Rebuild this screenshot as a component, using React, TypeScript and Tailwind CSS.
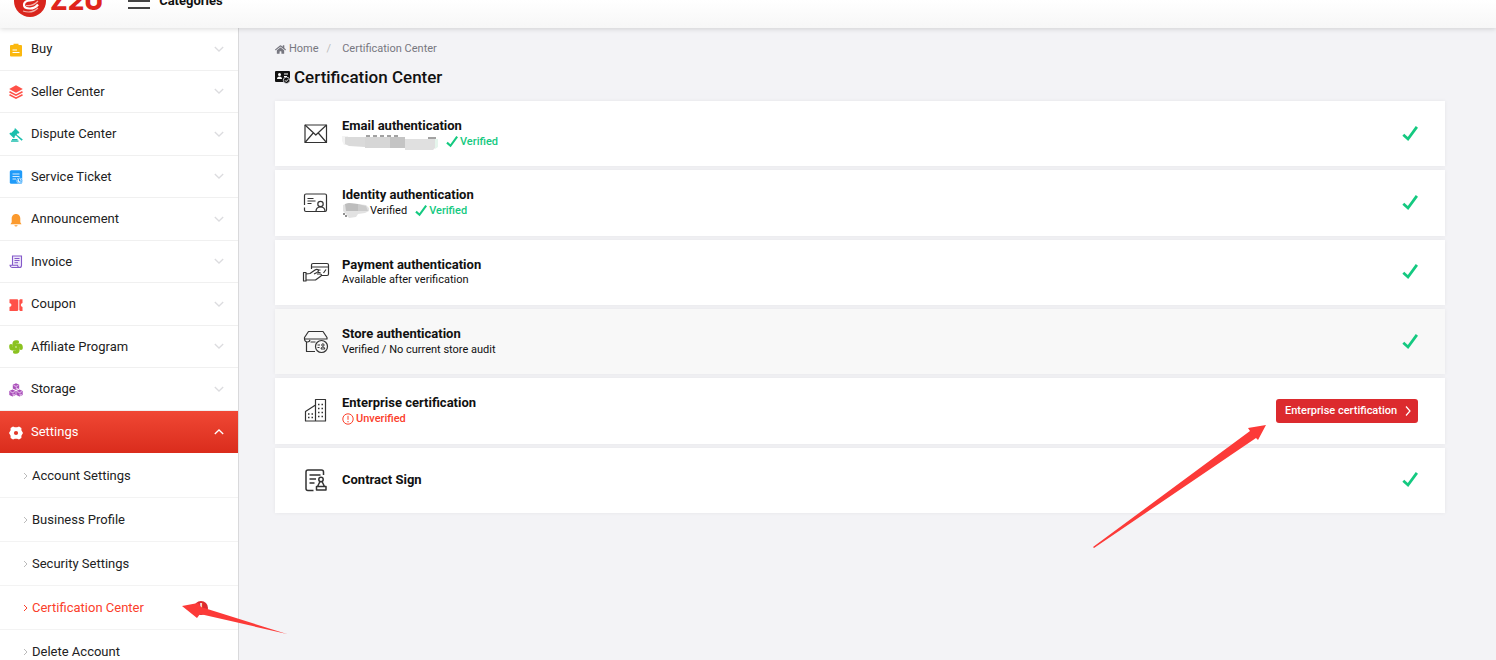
import React from 'react';
import { FaHome } from 'react-icons/fa';

interface MenuItem {
  label: string;
  icon: React.ReactNode;
}

interface Certification {
  title: string;
  icon: React.ReactNode;
  detail?: React.ReactNode;
  muted?: boolean;
  action?: string;
}

const MENU: MenuItem[] = [
  {
    label: 'Buy',
    icon: (
      <>
        <path d="M2 2h2.500V.8h5V2H12q1 0 1 1v9.500q0 1-1 1H2q-1 0-1-1V3q0-1 1-1Z" fill="#fbb80f" />
        <path d="M3.500 7h4.500M3.500 9.500h7" stroke="#fff" strokeWidth="1.100" />
      </>
    ),
  },
  {
    label: 'Seller Center',
    icon: (
      <>
        <path d="M7 .3 13.800 4 7 7.700.2 4Z" fill="#ff5148" />
        <path d="m.5 6.800 6.500 3.400 6.500-3.400M.5 9.700 7 13.100l6.500-3.400" stroke="#ff5148" strokeWidth="1.600" fill="none" />
      </>
    ),
  },
  {
    label: 'Dispute Center',
    icon: (
      <>
        <path d="m6.300.3 4.200 4.200-1.200 1.200-.5-.4-1.200 1.200 6.200 5-1.200 1.300-5.800-5.600-1.300 1.300.5.500-1.200 1.200L.3 5.700l1.200-1.200.6.500L5.800 1.600l-.6-.5Z" fill="#1cbfae" />
        <path d="M2 13.200h7.500M3 11.600h5.500" stroke="#1cbfae" strokeWidth="1.200" />
      </>
    ),
  },
  {
    label: 'Service Ticket',
    icon: (
      <>
        <rect x=".8" y=".3" width="12.400" height="13.400" rx="1.500" fill="#1f9bf9" />
        <path d="M3.500 4h7M3.500 6.500h7M3.500 9h3.500" stroke="#d3ebff" />
        <circle cx="10.500" cy="10.800" r="3" fill="#e6f4ff" />
        <path d="M10.500 9v2h1.800" stroke="#1f9bf9" fill="none" />
        <circle cx="10.500" cy="10.800" r="2.400" stroke="#1f9bf9" fill="none" strokeWidth=".7" />
      </>
    ),
  },
  {
    label: 'Announcement',
    icon: (
      <>
        <path d="M7 1c3 0 4.300 2.300 4.300 4.600v3.600l1.200 2H1.500l1.200-2V5.600C2.700 3.300 4 1 7 1Z" fill="#fb9a2e" />
        <path d="M5.300 12.300h3.400q-.4 1.200-1.700 1.200t-1.700-1.200Z" fill="#fb9a2e" />
      </>
    ),
  },
  {
    label: 'Invoice',
    icon: (
      <>
        <path d="M3.500 10V1h9v9.500q0 2-2 2H3q-1.800 0-2-2.200h7.500q.2 2.200 2 2.200" fill="#efe8fa" stroke="#8459c9" strokeWidth="1.100" />
        <path d="M5.500 3.500h5M5.500 5.500h5M5.500 7.700h3.500" stroke="#8459c9" />
      </>
    ),
  },
  {
    label: 'Coupon',
    icon: (
      <>
        <path d="M.5 1.300h8l.8 1v9.800l-.8 1h-8V9q2-.3 2-2t-2-2Z" fill="#ff5148" />
        <path d="M13.500 1.300H11l-.7 1v9.800l.7 1h2.500V9q-1.700-.5-1.700-2t1.700-2Z" fill="#ff5148" />
      </>
    ),
  },
  {
    label: 'Affiliate Program',
    icon: (
      <>
        <g stroke="#8bc220" strokeWidth="3.600" strokeLinecap="round">
          <path d="M8.300 2H7q-1.800 0-1.800 2v2" />
          <path d="M12 8.300V7q0-1.800-2-1.800H8" />
          <path d="M5.700 12H7q1.800 0 1.800-2V8" />
          <path d="M2 5.700V7q0 1.800 2 1.800h2" />
        </g>
        <circle cx="7" cy="7" r=".7" fill="#e4f3c5" />
      </>
    ),
  },
  {
    label: 'Storage',
    icon: (
      <>
        <path d="m7 .3 3.200 1.500v3.600L7 7 3.800 5.400V1.800ZM3.500 6.500l3.200 1.500v3.900l-3.200 1.600-3.200-1.600V8ZM10.500 6.500 13.700 8v3.900l-3.200 1.600-3.200-1.600V8Z" fill="#a94fb9" />
        <path d="m4.600 2.400 2.400 1 2.400-1M7.300 4.200v1.900l2-.9M1.100 8.600l2.400 1 2.400-1M4 10.500v1.900l1.900-.9M8.100 8.600l2.400 1 2.400-1M11 10.500v1.900l1.900-.9" stroke="#f7e3fb" strokeWidth=".8" fill="none" />
      </>
    ),
  },
];

const SETTINGS_LINKS = [
  'Account Settings',
  'Business Profile',
  'Security Settings',
  'Certification Center',
  'Delete Account',
];

const MenuIcon: React.FC<{ children: React.ReactNode }> = ({ children }) => (
  <svg className="w-3.5 h-3.5 mt-0.5 flex-shrink-0" viewBox="0 0 14 14" fill="none">
    {children}
  </svg>
);

const Tick: React.FC<{ className: string }> = ({ className }) => (
  <svg className={className} viewBox="0 0 16 16" fill="none" stroke="#14c980" strokeWidth="2.800">
    <path d="M1.300 8.800 6 13 14.900.9" />
  </svg>
);

const LineIcon: React.FC<{ children: React.ReactNode }> = ({ children }) => (
  <svg className="w-7 h-7" viewBox="0 0 28 28" fill="none" stroke="#333" strokeWidth="1.200" strokeLinejoin="round">
    {children}
  </svg>
);

const Verified = () => (
  <span className="flex items-center gap-0.5 font-medium text-[#14c980]">
    <Tick className="w-3 h-3" />
    Verified
  </span>
);

const CERTIFICATIONS: Certification[] = [
  {
    title: 'Email authentication',
    icon: (
      <>
        <rect x="3" y="5" width="21.500" height="17.500" />
        <path d="m3 5 10.800 10L24.500 5M3 22.500l8.200-9.500M24.500 22.500 16.300 13" />
      </>
    ),
    detail: (
      <>
        {/* masked address */}
        <svg className="w-24 h-4" viewBox="0 0 96 16">
          <path d="M24 2h4M31 2h4M38 2h4M45 2h4M52 2h4M86 4h8" stroke="#444" strokeWidth="1" />
          <path d="M0 2h6v9H2L0 7Z" fill="#f3f3f3" />
          <path d="M3 3h20v10l-16-1-4-2Z" fill="#dadada" />
          <path d="M23 3h25v11H23Z" fill="#d6d6d6" />
          <path d="M48 3h15v11H48Z" fill="#c4c4c4" />
          <path d="M63 5h30v9l-2 2H63Z" fill="#e0e0e0" />
          <path d="M93 5h3v8l-3 2Z" fill="#e5f5ec" />
        </svg>
        <Verified />
      </>
    ),
  },
  {
    title: 'Identity authentication',
    icon: (
      <>
        <path d="M2.500 16V6.500Q2.500 5 4 5h19q1.500 0 1.500 1.500V21q0 1.500-1.500 1.500H4q-1.500 0-1.500-1.500v-2.500" />
        <path d="M5.500 9.500h6M5.500 12h8M5.500 14.500h4" />
        <circle cx="18.500" cy="15" r="2.700" />
        <path d="M14 22.500q0-4.500 4.500-4.500t4.500 4.500" />
      </>
    ),
    detail: (
      <>
        <span className="flex items-center">
          <svg className="w-7 h-4" viewBox="0 0 28 16">
            <path d="M1 11h2M3 13h2" stroke="#222" />
            <path d="M1 2 6 0l18 2 3 3v3l-4 2-7 1-2 3-7 1-3-4-3-3Z" fill="#e2e2e2" />
            <path d="M3 1 7 0l9 1v7H4Z" fill="#bdbdbd" />
            <path d="M16 1l8 2 2 5H16Z" fill="#cbcbcb" />
          </svg>
          Verified
        </span>
        <Verified />
      </>
    ),
  },
  {
    title: 'Payment authentication',
    icon: (
      <>
        <path d="M9.500 11V7q0-1.500 1.500-1.500h14q1.500 0 1.500 1.500v9q0 1.500-1.500 1.500h-6M9.500 9h17M21.500 15l2.500-3.500M16 12h2.500M16 14.500h2.500" />
        <path d="M1.500 14.500h2.500v8.500H1.500ZM4 16l4-.5 5-3.500q2-1.200 3.500.2.200 1.500-1.500 2.300l-3 1.500M4 22h9.500l5.500-4q1-1.500-.5-2h-3.500" />
      </>
    ),
    detail: 'Available after verification',
  },
  {
    title: 'Store authentication',
    icon: (
      <>
        <path d="M6.500 3.500h14.500l4 6v1.500h-22.500V9.500ZM2.500 11.500q.5 2.500 3 2.500 2 0 2.500-2M4.500 14v9.500H13M8.500 14h5" />
        <circle cx="19.500" cy="18.500" r="6" fill="#f8f8f8" />
        <path d="M15.500 17h2.500M15.500 19.500h2M19 21q0-2 1.900-2t1.900 2Z" strokeWidth="1" />
        <circle cx="20.900" cy="17" r="1.200" strokeWidth="1" />
      </>
    ),
    detail: 'Verified / No current store audit',
    muted: true,
  },
  {
    title: 'Enterprise certification',
    icon: (
      <>
        <path d="M13.500 24v-21.500h10V24H3.500V14.500l10-6.500" />
        <path d="M16 7.500h1.500M19.500 7.500H21M16 11.500h1.500M19.500 11.500H21M16 15.500h1.500M19.500 15.500H21M16 19.500h1.500M19.500 19.500H21M6 17h1.500M9.500 17H11M6 20.500h1.500M9.500 20.500H11" strokeWidth="1.400" />
      </>
    ),
    detail: (
      <span className="flex items-center gap-0.5 font-medium text-[#fb402b]">
        <svg className="w-3 h-3" viewBox="0 0 12 12" fill="none" stroke="#fb402b">
          <circle cx="6" cy="6" r="5.200" />
          <path d="M6 2.800v4M6 8v1.300" />
        </svg>
        Unverified
      </span>
    ),
    action: 'Enterprise certification',
  },
  {
    title: 'Contract Sign',
    icon: (
      <>
        <path d="M21.500 9V6q0-2-2-2H6q-2 0-2 2v16.500q0 2 2 2h5.500M7.500 9h11M7.500 13h6.500M7.500 17h5" strokeWidth="1.500" />
        <circle cx="19" cy="13.500" r="2.200" strokeWidth="1.500" />
        <path d="m18 15.500-2.500 5h7l-2.500-5M14.500 20.500h9.500v3.500h-9.500Z" strokeWidth="1.500" />
      </>
    ),
  },
];

const Header = () => (
  <header className="relative z-10 bg-linear-to-b from-white to-[#f7f7f7] shadow-[0_1px_5px_rgba(0,0,0,0.15)]">
    <div className="flex h-7 items-start overflow-hidden pl-3.5">
      <a href="#home" className="flex items-center -mt-[15px] text-[#e0251c]">
        <svg className="w-8 h-8" viewBox="0 0 32 32" fill="none">
          <circle cx="16" cy="16" r="16" fill="#d9251d" />
          <path d="M8 11q3-5 9-4 6 1 5.500 5-.5 3-6.500 3.500-6 .5-6 4.500 0 3.500 6 3.500 5 0 8-4" stroke="#fff" strokeWidth="2.200" />
          <path d="M12 20.500q7 1 12-4.500M9 26q9 3 15-3" stroke="#f3b3ae" strokeWidth="1.200" />
        </svg>
        <span className="ml-1 font-['Inter'] text-[26px] leading-8 font-extrabold">Z2U</span>
      </a>
      <button className="-mt-[15px] ml-6 flex items-center gap-2 text-[13px] leading-8 font-bold text-[#111]">
        <svg className="w-6 h-8" viewBox="0 0 24 32" stroke="#444" strokeWidth="2">
          <path d="M1 8h22M1 16h22M1 23h22" />
        </svg>
        Categories
      </button>
    </div>
  </header>
);

const Sidebar = () => (
  <nav className="w-[239px] flex-shrink-0 border-r border-[#d9d9db] bg-white text-[13px] text-[#222]">
    <div className="grid min-h-[425px] auto-rows-fr">
      {MENU.map(({ label, icon }) => (
        <button key={label} className="flex items-center gap-2 border-b border-[#f0f0f0] pl-[9px] pr-3.5 text-left">
          <MenuIcon>{icon}</MenuIcon>
          <span className="flex-1">{label}</span>
          <svg className="w-2.5 h-2.5" viewBox="0 0 10 10" fill="none" stroke="#dcdcdf" strokeWidth="1.300">
            <path d="m.8 3 4.200 4 4.200-4" />
          </svg>
        </button>
      ))}
      <button className="flex items-center gap-2 bg-linear-to-b from-[#f04734] to-[#da2c1c] pl-[9px] pr-3.5 text-left text-white">
        <MenuIcon>
          <path d="M4 .5 5.800 1.300h2.400L10 .5l2.400 1.500v2.200L14 7l-1.600 2.800V12L10 13.500l-1.800-.8H5.800l-1.800.8L1.600 12V9.800L0 7l1.600-2.800V2Z" fill="#fff" />
          <circle cx="7" cy="7" r="2.100" fill="#e33827" />
        </MenuIcon>
        <span className="flex-1">Settings</span>
        <svg className="w-2.5 h-2.5" viewBox="0 0 10 10" fill="none" stroke="#fff" strokeWidth="1.300">
          <path d="m.8 7 4.200-4 4.200 4" />
        </svg>
      </button>
    </div>
    <ul className="pt-px">
      {SETTINGS_LINKS.map(label => {
        const active = label === 'Certification Center';
        return (
          <li key={label} className="border-b border-[#f3f3f3]">
            <a href="#settings" className={`flex h-[43px] items-center gap-1 pl-[23px] ${active ? 'text-[#fb402b]' : ''}`}>
              <svg className="w-[5px] h-2" viewBox="0 0 5 8" fill="none" stroke={active ? '#fb402b' : '#bbb'}>
                <path d="m1 1 3 3-3 3" />
              </svg>
              {label}
              {active && (
                <span className="ml-auto mr-[30px] flex h-3.5 w-3.5 items-center justify-center rounded-full bg-[#dc2a2e] text-[10px] font-bold text-white">
                  !
                </span>
              )}
            </a>
          </li>
        );
      })}
    </ul>
  </nav>
);

const CertificationCard: React.FC<{ item: Certification }> = ({ item }) => (
  <li className={`flex items-center px-[27px] shadow-[0_0_4px_rgba(0,0,0,0.06)] ${item.muted ? 'bg-[#f8f8f8]' : 'bg-white'}`}>
    <LineIcon>{item.icon}</LineIcon>
    <div className="ml-3 flex-1 text-[11px] leading-4 text-[#111]">
      <h2 className="text-[13px] leading-4 font-bold">{item.title}</h2>
      {item.detail && <div className="flex h-[15px] items-center gap-2">{item.detail}</div>}
    </div>
    {item.action ? (
      <button className="flex h-6 min-w-[142px] items-center justify-between rounded-[3px] bg-[#dc2a2e] pl-[9px] pr-1.5 text-[11px] font-medium text-white">
        {item.action}
        <svg className="w-2 h-3" viewBox="0 0 8 12" fill="none" stroke="#fff" strokeWidth="1.200">
          <path d="m2 1.500 4 4.500-4 4.500" />
        </svg>
      </button>
    ) : (
      <Tick className="w-4 h-4" />
    )}
  </li>
);

// Hand-drawn pointers laid over the page
const Arrows = () => (
  <>
    <svg className="pointer-events-none absolute left-[182px] top-[598px] z-20 h-9 w-[106px]" viewBox="0 0 106 36">
      <path d="m0 8 16-3 3 4 86 27-87-20-3 4Z" fill="#fc3a38" />
    </svg>
    <svg className="pointer-events-none absolute left-[1092px] top-[424px] z-20 h-[125px] w-[175px]" viewBox="0 0 175 125">
      <path d="m174 1-8 15-2-2L2 124l-1-1L158 7l-2-3Z" fill="#fc3a38" />
    </svg>
  </>
);

const App = () => (
  <div className="relative flex h-screen flex-col overflow-hidden bg-[#f3f3f6] font-['Roboto',sans-serif] text-[#111]">
    <Header />
    <div className="flex flex-1">
      <Sidebar />
      <main className="flex-1 pl-9 pr-[51px] pt-[13px]">
        <nav className="flex items-center text-[11px] leading-4 text-[#777780]">
          <a href="#home" className="flex items-center gap-[3px]">
            <FaHome className="w-[11px] h-[11px]" />
            Home
          </a>
          <span className="mx-2 text-[#bbb]">/</span>
          <span className="ml-[3px]">Certification Center</span>
        </nav>
        <h1 className="mt-2 flex items-center gap-1 text-[17px] leading-6 font-medium">
          <svg className="w-[15px] h-3.5" viewBox="0 0 15 14">
            <rect y="1" width="15" height="11" rx="1" fill="#111" />
            <circle cx="4.500" cy="4.500" r="1.500" fill="#fff" />
            <path d="M2 9q0-2.500 2.500-2.500T7 9ZM9 3.500h4v1H9ZM9 6h3v1H9Z" fill="#fff" />
            <circle cx="11.500" cy="10.300" r="3.200" fill="#111" stroke="#f3f3f6" strokeWidth=".8" />
            <path d="m10 10.300 1.200 1.200 2-2.200" stroke="#fff" fill="none" />
          </svg>
          Certification Center
        </h1>
        <ul className="mt-3 grid min-h-[412px] auto-rows-fr gap-1">
          {CERTIFICATIONS.map(item => (
            <CertificationCard key={item.title} item={item} />
          ))}
        </ul>
      </main>
    </div>
    <Arrows />
  </div>
);

export default App;
